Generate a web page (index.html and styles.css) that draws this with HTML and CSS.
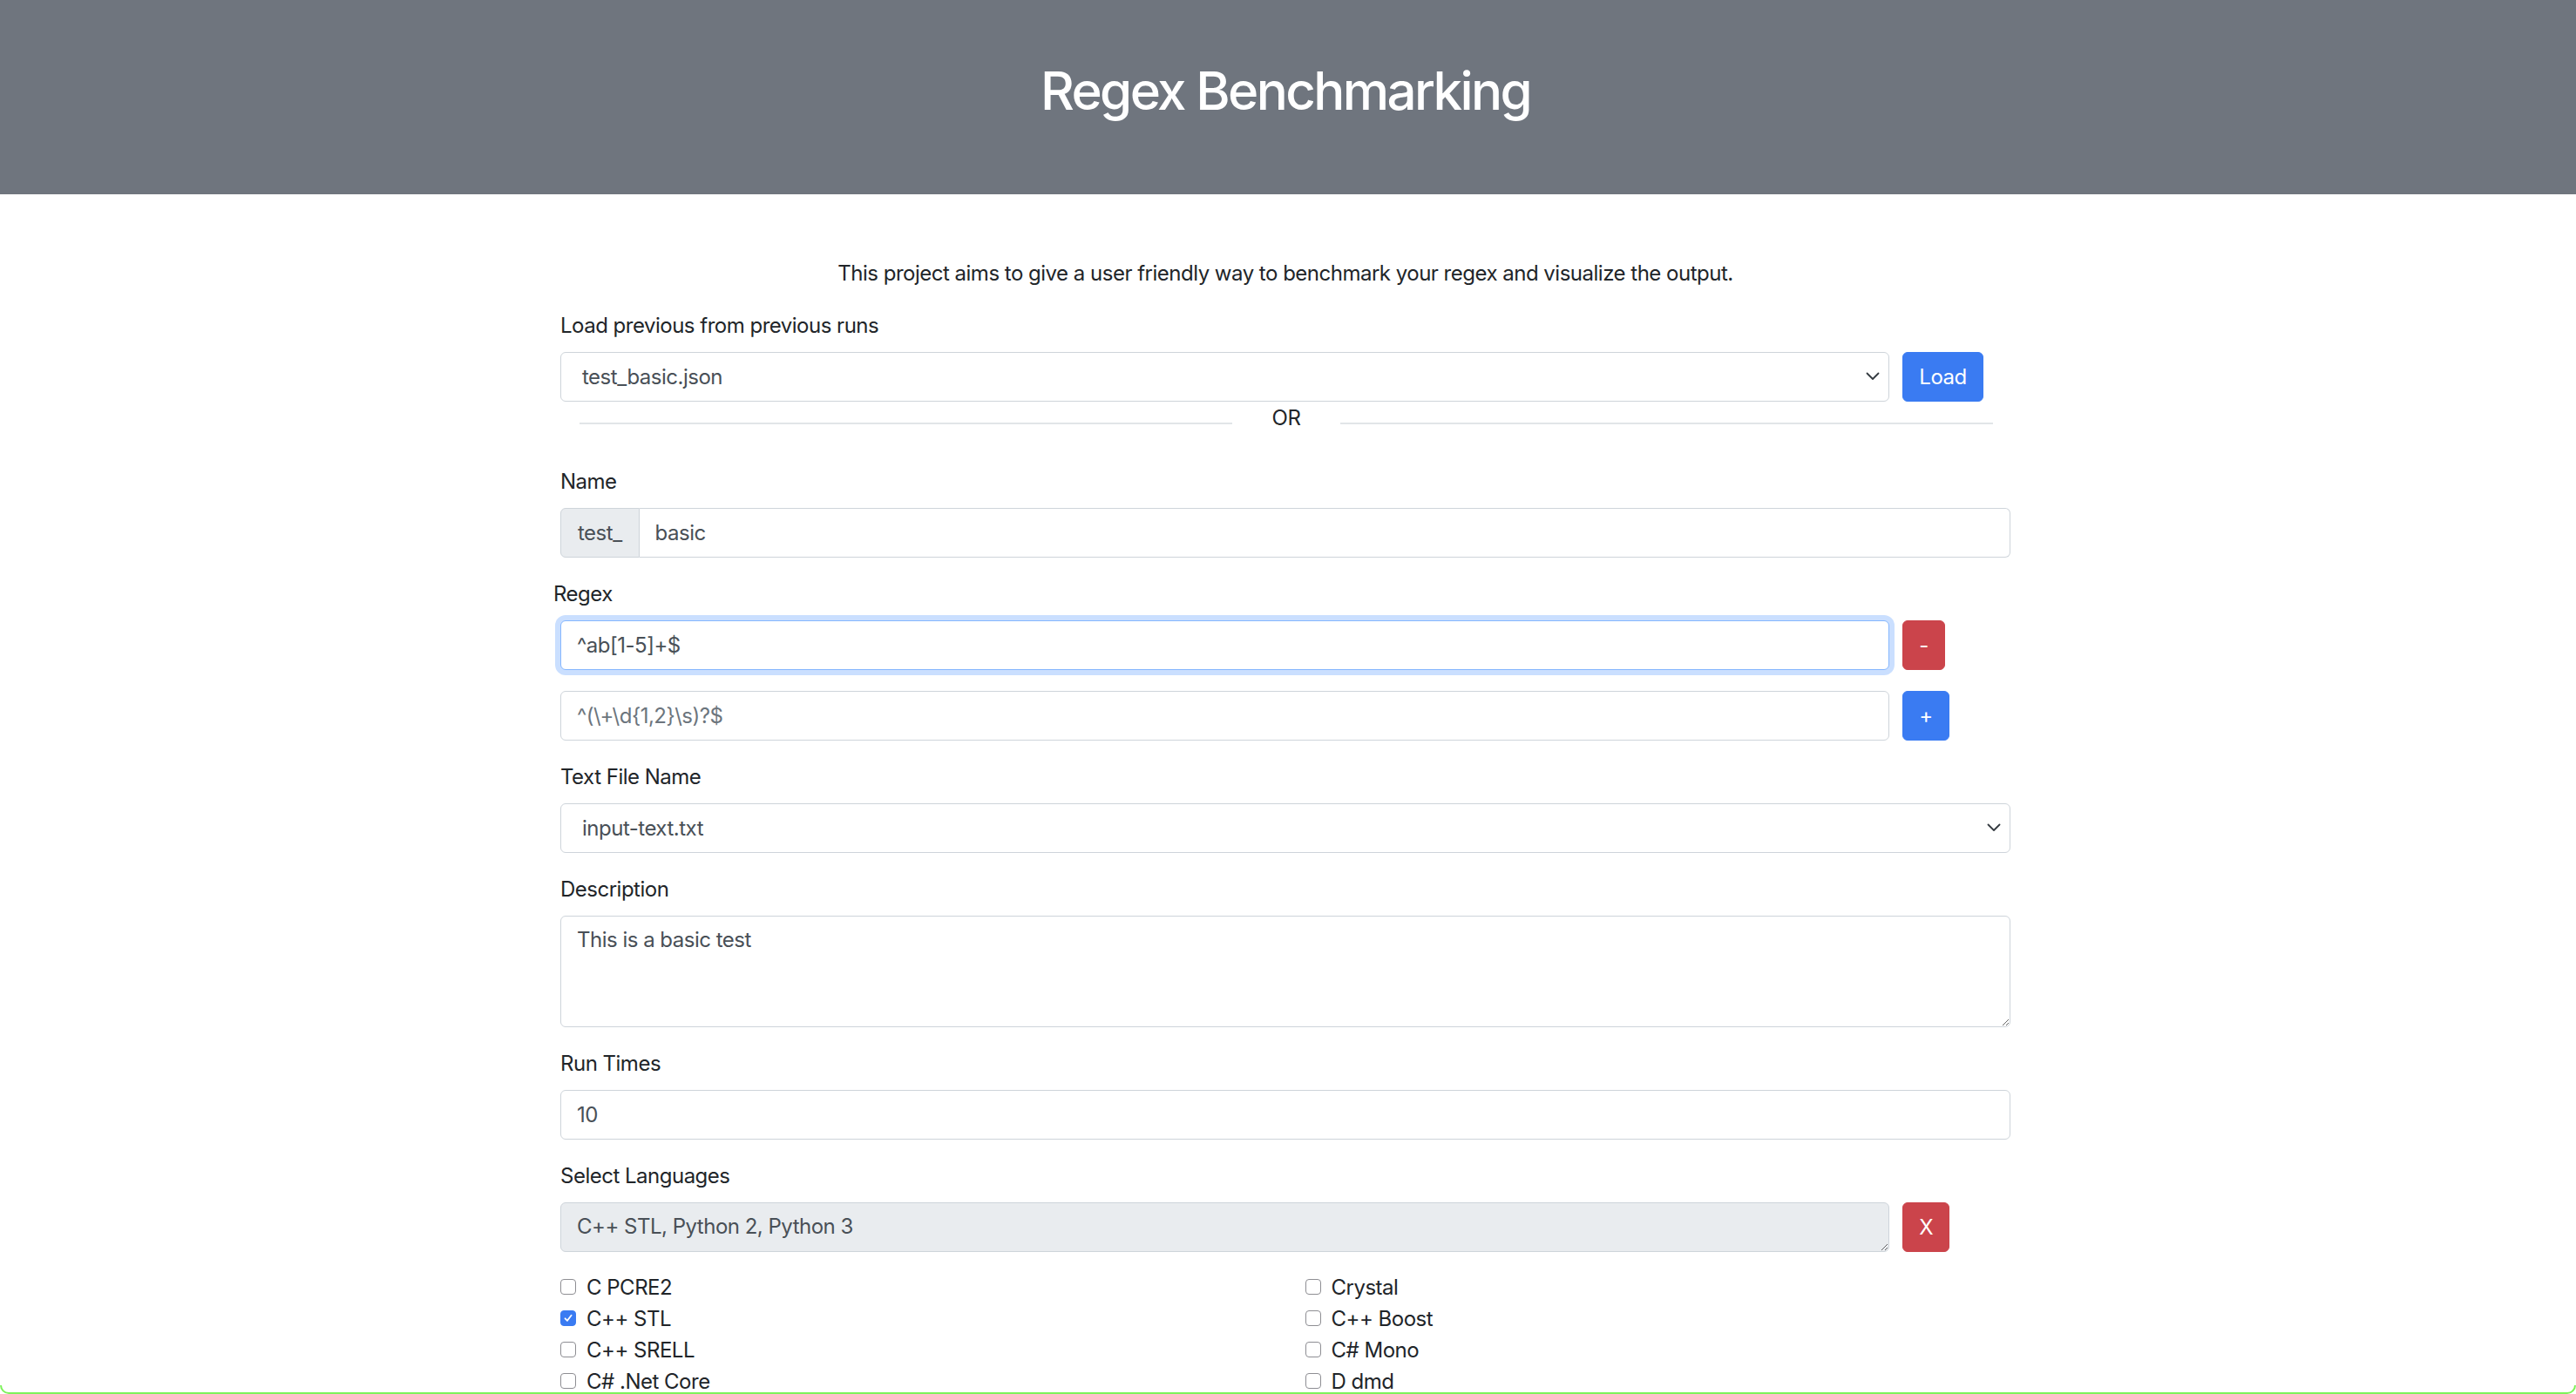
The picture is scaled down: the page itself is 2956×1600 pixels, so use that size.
FILE: index.html
```html
<!DOCTYPE html>
<html lang="en">
<head>
<meta charset="utf-8">
<title>Regex Benchmarking</title>
<link rel="stylesheet" href="styles.css">
</head>
<body>
<header class="hero">
  <h1 class="hero-title">Regex Benchmarking</h1>
</header>
<main class="main">
  <div class="container">
    <p class="intro">This project aims to give a user friendly way to benchmark your regex and visualize the output.</p>

    <div class="load-group">
      <label class="label">Load previous from previous runs</label>
      <div class="row-11">
        <div class="control select">
          <span class="select-text">test_basic.json</span>
          <svg class="chev" width="16" height="10" viewBox="0 0 16 10"><path d="M1.5 1.5 L8 8 L14.5 1.5" fill="none" stroke="#343a40" stroke-width="1.8" stroke-linecap="round" stroke-linejoin="round"/></svg>
        </div>
        <button class="btn btn-primary">Load</button>
      </div>
    </div>

    <div class="or-row">
      <span class="or-line"></span>
      <span class="or-text">OR</span>
      <span class="or-line"></span>
    </div>

    <div class="group">
      <label class="label">Name</label>
      <div class="input-group">
        <span class="addon">test_</span>
        <input class="control flush" type="text" value="basic">
      </div>
    </div>

    <div class="regex-block">
      <label class="label label-shift">Regex</label>
      <div class="row-11 regex-row">
        <input class="control focused" type="text" value="^ab[1-5]+$">
        <button class="btn btn-danger">-</button>
      </div>
      <div class="row-11 regex-row">
        <input class="control" type="text" placeholder="^(\+\d{1,2}\s)?$">
        <button class="btn btn-primary">+</button>
      </div>
    </div>

    <div class="group">
      <label class="label">Text File Name</label>
      <div class="control select">
        <span class="select-text">input-text.txt</span>
        <svg class="chev" width="16" height="10" viewBox="0 0 16 10"><path d="M1.5 1.5 L8 8 L14.5 1.5" fill="none" stroke="#343a40" stroke-width="1.8" stroke-linecap="round" stroke-linejoin="round"/></svg>
      </div>
    </div>

    <div class="group">
      <label class="label">Description</label>
      <textarea class="control area" rows="3">This is a basic test</textarea>
    </div>

    <div class="group">
      <label class="label">Run Times</label>
      <input class="control" type="text" value="10">
    </div>

    <div class="lang-group">
      <label class="label">Select Languages</label>
      <div class="row-11">
        <textarea class="control area-1 readonly" rows="1" readonly>C++ STL, Python 2, Python 3</textarea>
        <button class="btn btn-danger btn-x">X</button>
      </div>
    </div>

    <div class="checks">
      <div class="check"><span class="cb"></span><span>C PCRE2</span></div>
      <div class="check"><span class="cb"></span><span>Crystal</span></div>
      <div class="check"><span class="cb checked"><svg width="12" height="12" viewBox="0 0 12 12"><path d="M2.5 6.3 L5 8.8 L9.6 2.8" fill="none" stroke="#fff" stroke-width="1.8" stroke-linecap="round" stroke-linejoin="round"/></svg></span><span>C++ STL</span></div>
      <div class="check"><span class="cb"></span><span>C++ Boost</span></div>
      <div class="check"><span class="cb"></span><span>C++ SRELL</span></div>
      <div class="check"><span class="cb"></span><span>C# Mono</span></div>
      <div class="check"><span class="cb"></span><span>C# .Net Core</span></div>
      <div class="check"><span class="cb"></span><span>D dmd</span></div>
    </div>
  </div>
</main>
<div class="edge"></div>
</body>
</html>
```
FILE: styles.css
```css
* { box-sizing: border-box; }

html, body {
  margin: 0;
  padding: 0;
  background: #fff;
}

body {
  font-family: Inter, "Noto Sans", "Liberation Sans", sans-serif;
  font-size: 24px;
  line-height: 36px;
  letter-spacing: -0.5px;
  color: #212529;
}

.hero {
  background: #6f757e;
  height: 223px;
  padding: 68px 6px 0 0;
}

.hero-title {
  margin: 0;
  text-align: center;
  color: #fff;
  font-size: 60px;
  line-height: 72px;
  font-weight: 500;
  letter-spacing: -2.6px;
}

.main {
  padding: 73px 6px 0 0;
}

.container {
  width: 1664px;
  margin: 0 auto;
}

.intro {
  margin: 0 0 24px;
  text-align: center;
}

.group {
  margin-bottom: 24px;
}

.load-group {
  margin-bottom: 0;
}

.label {
  display: block;
  margin-bottom: 12px;
}

.label-shift {
  margin-left: -8px;
}

.row-11 {
  display: flex;
  align-items: flex-start;
}

.row-11 > .control {
  width: 91.667%;
  flex: 0 0 91.667%;
}

.regex-row {
  margin-bottom: 24px;
}

.control {
  display: block;
  width: 100%;
  height: 57px;
  padding: 9px 18px;
  font-family: inherit;
  font-size: 24px;
  line-height: 36px;
  letter-spacing: inherit;
  color: #495057;
  background: #fff;
  border: 1.5px solid #ced4da;
  border-radius: 6px;
  outline: none;
  margin: 0;
}

.control::placeholder {
  color: #6c757d;
}

.focused {
  border-color: #86b7fe;
  box-shadow: 0 0 0 6px rgba(13, 110, 253, 0.22);
}

.select {
  display: flex;
  align-items: center;
  justify-content: space-between;
  padding-left: 24px;
  padding-right: 10px;
}

.chev {
  flex: none;
  margin-top: -2px;
}

.btn {
  height: 57px;
  margin-left: 15px;
  padding: 9px 18px;
  font-family: inherit;
  font-size: 24px;
  line-height: 36px;
  letter-spacing: inherit;
  color: #fff;
  border: 1.5px solid transparent;
  border-radius: 6px;
}

.btn-primary {
  background: #3a7bf2;
  border-color: #3a7bf2;
}

.btn-danger {
  background: #cb444b;
  border-color: #cb444b;
}

.or-row {
  display: flex;
  align-items: center;
  margin: 1px 20px 37px 22px;
}

.or-line {
  flex: 1;
  height: 1.5px;
  background: #e2e5e8;
  margin-top: 12px;
}

.or-text {
  padding: 0 46px;
  line-height: 36px;
}

.input-group {
  display: flex;
}

.addon {
  display: flex;
  align-items: center;
  height: 57px;
  padding: 9px 19px;
  color: #495057;
  background: #e9ecef;
  border: 1.5px solid #ced4da;
  border-radius: 6px 0 0 6px;
  white-space: nowrap;
}

.flush {
  flex: 1;
  border-left: none;
  border-radius: 0 6px 6px 0;
}

.area {
  height: 128px;
  resize: vertical;
}

.area-1 {
  height: 57px;
  resize: vertical;
}

.readonly {
  background: #e9ecef;
}

.lang-group {
  margin-bottom: 23px;
}

.checks {
  display: grid;
  grid-template-columns: 1fr 1fr;
  column-gap: 45px;
}

.check {
  display: flex;
  align-items: center;
  height: 36px;
}

.cb {
  flex: none;
  width: 18px;
  height: 18px;
  margin-right: 12px;
  margin-top: -2px;
  border: 1.5px solid #8e8e93;
  border-radius: 4px;
  background: #fff;
  display: flex;
  align-items: center;
  justify-content: center;
}

.cb.checked {
  background: #3a7bf2;
  border-color: #3a7bf2;
}

.edge {
  position: fixed;
  left: 0;
  right: 0;
  bottom: 0;
  height: 10px;
  border: 2.5px solid #7df25b;
  border-top: none;
  border-radius: 0 0 10px 10px;
  pointer-events: none;
}
```
